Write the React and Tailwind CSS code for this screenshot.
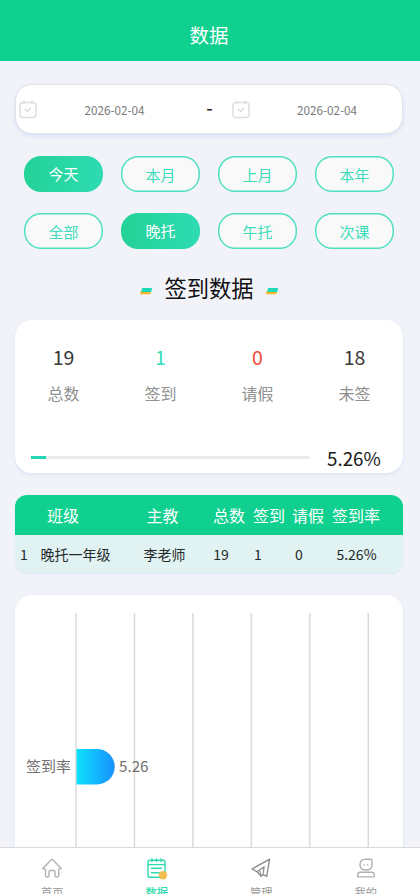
import React, { useState } from 'react';
import clsx from 'clsx';

const ranges = ['今天', '本月', '上月', '本年'];
const types = ['全部', '晚托', '午托', '次课'];

const stats = [
    { label: '总数', value: 19, color: 'text-[#383838]' },
    { label: '签到', value: 1, color: 'text-[#35dcb8]' },
    { label: '请假', value: 0, color: 'text-[#f04a3c]' },
    { label: '未签', value: 18, color: 'text-[#383838]' },
];

const rows = [{ name: '晚托一年级', teacher: '李老师', total: 19, signed: 1, leave: 0, rate: 5.26 }];

function CalendarIcon() {
    return (
        <svg width="18" height="19" viewBox="0 0 18 19" fill="none" stroke="#dedede" strokeWidth="1.5" strokeLinecap="round" strokeLinejoin="round">
            <rect x="1" y="2.5" width="16" height="15" rx="3" />
            <path d="M5 1v2.5M13 1v2.5M6.3 9.4l2.1 2.1 3.3-3.3" />
        </svg>
    );
}

function HomeIcon() {
    return (
        <svg width="20" height="20" viewBox="0 0 20 20" fill="none" stroke="#b2b2b2" strokeWidth="1.4" strokeLinecap="round" strokeLinejoin="round">
            <path d="M1 10.3 9.2 1.8q.8-.8 1.6 0L19 10.3q.2.8-.7.8h-1.6v6.5q0 1.4-1.4 1.4h-1q-1.3 0-1.3-1.3v-4q0-1.2-1.2-1.2H8.2q-1.2 0-1.2 1.2v4q0 1.3-1.3 1.3h-.8q-1.4 0-1.4-1.4v-6.5H1.7q-.9 0-.7-.8Z" />
        </svg>
    );
}

function DataIcon() {
    return (
        <svg width="22" height="22" viewBox="0 0 22 22" fill="none" stroke="#2edbae" strokeWidth="1.4" strokeLinecap="round" strokeLinejoin="round">
            <rect x="2" y="2.3" width="17" height="17" rx="1.5" />
            <path d="M2 6.6h17M6 1v2.6M10.5 1v2.6M15 1v2.6M5.5 10.3h10M5.5 14.7h9" />
            <circle cx="17" cy="17.2" r="4.2" fill="#f3bd50" stroke="none" />
        </svg>
    );
}

function ManageIcon() {
    return (
        <svg width="20" height="20" viewBox="0 0 20 20" fill="none" stroke="#8e8e8e" strokeWidth="1.4" strokeLinecap="round" strokeLinejoin="round">
            <path d="M18.6 1.2 1 11l5.2 2.8 3.9 4.4 2-1.6 3.6 1.8Z" />
            <path d="M6.2 13.6 13.2 8.7 12 16.4M8.8 12.6l1.3 5.2" strokeWidth="1.2" />
        </svg>
    );
}

function MineIcon() {
    return (
        <svg width="20" height="20" viewBox="0 0 20 20" fill="none" stroke="#b0b0b0" strokeWidth="1.4" strokeLinecap="round" strokeLinejoin="round">
            <path d="M9.9 1.2h4.9q1.2 0 1.2 1.2v4.3q0 5.3-6 5.3t-6-5.3q0-5.5 5.9-5.5Z" />
            <path d="M8.2 6.6v.5M11.6 6.6v.5M4.2 14.2h11.6q2.5 0 2.5 2.2v1.6q0 .9-.9.9H2.6q-.9 0-.9-.9v-1.6q0-2.2 2.5-2.2Z" />
        </svg>
    );
}

function TitleMark() {
    return (
        <svg width="12" height="7" viewBox="0 0 12 7">
            <path d="M.6 3h10.6l-.8 3.3H0Z" fill="#f8b62d" />
            <path d="M2 0h10l-.8 4H1.2Z" fill="#1cd9b8" />
        </svg>
    );
}

function PillRow({ items, active, onChange }) {
    return (
        <div className="grid grid-cols-4 justify-items-center">
            {items.map(item => (
                <button
                    key={item}
                    type="button"
                    onClick={() => onChange(item)}
                    className={clsx(
                        'w-[79px] h-9 rounded-[17px] text-[15px]',
                        item === active
                            ? 'bg-linear-to-r from-[#23d296] to-[#2edbb3] text-white leading-9'
                            : 'bg-[#f8f9f8] shadow-[inset_0_0_0_1.5px_#50dfc0] text-[#3cdcbc] leading-[35px] pt-px'
                    )}
                >
                    {item}
                </button>
            ))}
        </div>
    );
}

const tabs = [
    { label: '首页', Icon: HomeIcon },
    { label: '数据', Icon: DataIcon, active: true },
    { label: '管理', Icon: ManageIcon },
    { label: '我的', Icon: MineIcon },
];

export default function App() {
    const [range, setRange] = useState('今天');
    const [type, setType] = useState('晚托');
    const percent = 5.26;

    return (
        <div className="h-[894px] w-[420px] flex flex-col overflow-hidden bg-[#f2f3f9] font-['Noto_Sans_CJK_SC',sans-serif]">
            <header className="h-[61px] shrink-0 bg-[#0fd08e] text-white text-[19.5px] leading-7 text-center pt-[21px] pr-0.5">
                数据
            </header>

            <main className="flex-1 min-h-0 overflow-hidden pl-[15px] pr-[17px] pt-[23px]">
                {/* Date range */}
                <div className="h-[50px] bg-white border-[1.5px] border-[#e2e3e6] rounded-[17px] shadow-[0_2px_4px_#d5e0f5] flex items-center text-[11.7px] text-[#777]">
                    <div className="w-[183px] pl-[3px] flex items-center">
                        <CalendarIcon />
                        <span className="flex-1 text-center pr-[7px] pt-px">2026-02-04</span>
                    </div>
                    <span className="w-[21px] text-center text-lg font-medium text-[#222] pb-1">-</span>
                    <div className="flex-1 pl-[12px] flex items-center">
                        <CalendarIcon />
                        <span className="flex-1 text-center pl-0.5 pt-px">2026-02-04</span>
                    </div>
                </div>

                <div className="mt-[22px] space-y-[21px]">
                    <PillRow items={ranges} active={range} onChange={setRange} />
                    <PillRow items={types} active={type} onChange={setType} />
                </div>

                <h2 className="mt-[22px] h-8 flex items-center justify-center gap-3 text-[22.3px] leading-8 text-[#111]">
                    <span className="pt-2"><TitleMark /></span>
                    签到数据
                    <span className="pt-2"><TitleMark /></span>
                </h2>

                {/* Summary */}
                <section className="mt-[17px] h-[153px] bg-white rounded-[17px] shadow-[0_2px_4px_#dae4f6] pt-[22px]">
                    <div className="grid grid-cols-4 text-center">
                        {stats.map(s => (
                            <div key={s.label}>
                                <div className={clsx('text-[19.5px] leading-[30px]', s.color)}>{s.value}</div>
                                <div className="mt-[9px] text-base leading-6 text-[#909090]">{s.label}</div>
                            </div>
                        ))}
                    </div>
                    <div className="mt-[37px] pl-4 flex items-center">
                        <div className="w-[279px] h-[3.5px] bg-[#ebebeb]">
                            <div className="h-full bg-[#24d7b4]" style={{ width: `${percent}%` }} />
                        </div>
                        <span className="ml-[17px] pt-px text-[18.8px] leading-[30px] text-[#1b1b1b]">{percent}%</span>
                    </div>
                </section>

                {/* Class table */}
                <section className="mt-[22px] rounded-[12px] overflow-hidden shadow-[0_1px_2px_#dce5f7] bg-[#e1f2f2]">
                    <div className="h-10 bg-[#0fd08e] text-white text-base leading-10 text-center grid grid-cols-[96px_104px_28px_52px_28px_80px]">
                        <span>班级</span>
                        <span className="pr-px">主教</span>
                        <span className="-mx-1">总数</span>
                        <span>签到</span>
                        <span className="-mx-1 -translate-x-px">请假</span>
                        <span className="pr-3.5">签到率</span>
                    </div>
                    {rows.map((r, i) => (
                        <div key={r.name} className="h-[38px] text-sm leading-[38px] text-[#252a2a] text-center grid grid-cols-[18px_85px_93px_20px_54px_28px_87px]">
                            <span>{i + 1}</span>
                            <span className="whitespace-nowrap">{r.name}</span>
                            <span>{r.teacher}</span>
                            <span>{r.total}</span>
                            <span>{r.signed}</span>
                            <span>{r.leave}</span>
                            <span>{r.rate}%</span>
                        </div>
                    ))}
                </section>

                {/* Sign-in rate chart */}
                <section className="mt-[22px] h-[320px] bg-white rounded-[17px] shadow-[0_2px_4px_#dae4f6]">
                    <svg width="388" height="320" viewBox="0 0 388 320">
                        <defs>
                            <linearGradient id="bar" x1="0" x2="1">
                                <stop offset="0" stopColor="#0de2fb" />
                                <stop offset="1" stopColor="#1890ff" />
                            </linearGradient>
                        </defs>
                        {[0, 1, 2, 3, 4, 5].map(i => (
                            <path key={i} d={`M${61 + i * 58.45} 18V320`} stroke="#dadada" strokeWidth="1.5" />
                        ))}
                        <path d="M61.5 154H82a17.7 17.7 0 0 1 0 35.4H61.5Z" fill="url(#bar)" />
                        <text x="11" y="176.5" fontSize="15" fill="#707070">签到率</text>
                        <text x="104" y="176.5" fontSize="15.2" fill="#707070">{percent}</text>
                    </svg>
                </section>
            </main>

            <nav className="h-[47px] shrink-0 bg-white border-t border-[#d9d9d9] grid grid-cols-4 pr-0.5">
                {tabs.map(({ label, Icon, active }) => (
                    <div key={label} className="flex flex-col items-center pt-[10px]">
                        <div className="h-[22px]"><Icon /></div>
                        <span className={clsx('mt-1 text-[11.2px] leading-4', active ? 'text-[#2edbae] font-medium' : 'text-[#999]')}>{label}</span>
                    </div>
                ))}
            </nav>
        </div>
    );
}
